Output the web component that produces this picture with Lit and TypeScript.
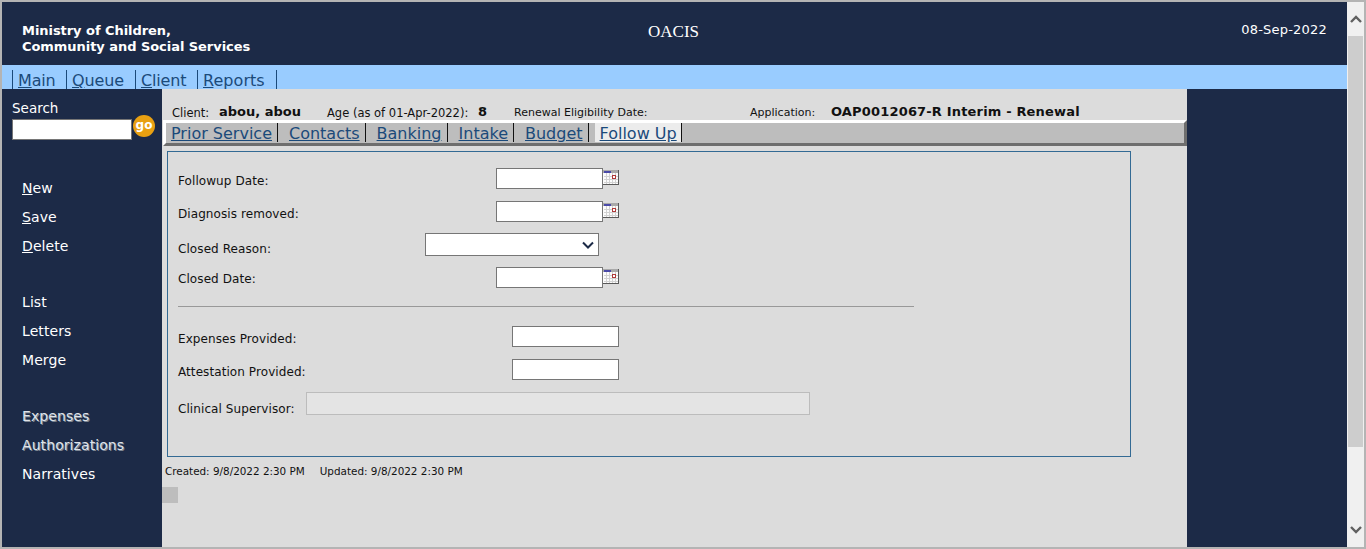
import { LitElement, html, css } from "lit";
import { customElement } from "lit/decorators.js";

const cal = html`<svg class="cal" width="16" height="15" viewBox="0 0 16 15" shape-rendering="crispEdges">
  <rect width="16" height="15" fill="#fcfcfc"/>
  <path d="M1 6.5H15M1 9.5H15M1 12.5H15M3.5 3V14M6.5 3V14M9.5 3V14M12.5 3V14" stroke="#d2d2d2" stroke-width="1" fill="none"/>
  <rect width="16" height="3" fill="#a9a9a9"/>
  <rect x="1" y="1" width="7" height="2" fill="#4a4aa8"/>
  <rect x="9.5" y="5.5" width="3" height="3" fill="#fff" stroke="#b03a3a"/>
  <path d="M15.5 0V14.5H0" stroke="#5a5a5a" fill="none"/>
</svg>`;

@customElement("app-root")
export class AppRoot extends LitElement {
  static styles = css`
    :host { display: block; width: 1366px; height: 549px; overflow: hidden; box-sizing: border-box;
      border: 2px solid #b4b4b4; font-family: "DejaVu Sans", Verdana, sans-serif; color: #111; }
    * { box-sizing: border-box; }
    .shell { display: flex; height: 545px; }
    .page { width: 1345px; display: flex; flex-direction: column; background: #1c2a47; }
    .head { height: 63px; display: grid; grid-template-columns: 1fr auto 1fr; color: #fff; padding: 0 20px; }
    .org { font-weight: 700; font-size: 13px; line-height: 16px; padding-top: 21px; letter-spacing: -0.05px; }
    .title { font-family: "Liberation Serif", serif; font-size: 17px; padding-top: 20px; line-height: 20px; transform: translateX(-1px); }
    .date { text-align: right; font-size: 13px; padding-top: 19px; line-height: 17px; letter-spacing: 0.2px; }
    .nav { height: 24px; background: #99ccff; display: flex; padding: 5px 0 0 10px; }
    .nav a { display: block; height: 19px; border-left: 1px solid #1b4a7a; padding-left: 5px; font-size: 16px; line-height: 21px;
      color: #1b4a7a; letter-spacing: -0.15px; }
    .nav a.n1 { width: 54px; }
    .nav a.n2 { width: 69px; }
    .nav a.n3 { width: 62px; }
    .nav a.n4 { width: 79px; letter-spacing: 0.05px; }
    .nav a.end { width: 0; padding: 0; }
    .nav u, .side u { text-decoration: underline; }
    .body { flex: 1; display: flex; min-height: 0; }
    .side { width: 160px; color: #fff; font-size: 14px; padding: 11px 0 0 10px; }
    .side .lbl { line-height: 16px; font-size: 13.5px; height: 16px; }
    .searchrow { display: flex; height: 30px; position: relative; }
    .searchrow .inp { width: 120px; height: 21px; margin-top: 3px; background: #fff; border: 1px solid #767676; }
    .go { width: 22px; height: 22px; margin-left: 1px; margin-top: -1px; border-radius: 50%; background: #e8a012; color: #fff;
      font-weight: 700; font-size: 12px; line-height: 20px; text-align: center; }
    .menu { display: flex; flex-direction: column; padding-left: 10px; }
    .menu a { display: block; height: 29px; line-height: 29px; letter-spacing: 0.08px; }
    .m1 { margin-top: 28px; }
    .gap { margin-top: 27px; }
    .dis { color: #dfe3ea; text-shadow: 1px 1px 0 #7f8794; }
    .main { width: 1025px; background: #dcdcdc; display: flex; flex-direction: column; }
    .info { height: 31px; display: flex; align-items: flex-end; padding: 0 0 0 10px; font-size: 11px; line-height: 14px; white-space: nowrap; }
    .info span { display: block; }
    .info .big { font-size: 11.5px; }
    .info .w47 { width: 47px; }
    .info .w108 { width: 108px; }
    .info .w151 { width: 151px; }
    .info .w36 { width: 36px; }
    .info .w236 { width: 236px; }
    .info .w81 { width: 81px; }
    .info b { font-size: 13px; font-weight: 700; }
    .info b.wide { letter-spacing: 0.17px; }
    .tabs { height: 26px; margin-left: 1px; background: #bdbdbd; border: 3px solid; border-color: #fff #6e6e6e #6e6e6e #fff; display: flex; padding-left: 5px; }
    .tabs a { display: block; height: 19px; padding: 0 5px 0 11px; border-right: 1px solid #111; font-size: 16px; line-height: 21px;
      color: #1b4a7a; text-decoration: underline; }
    .tabs a:first-child { padding-left: 0; }
    .tabs a.on { background: linear-gradient(to right, #bdbdbd 0 6px, #ececec 6px); padding-right: 4px; }
    .panel { margin: 5px 0 0 5px; width: 964px; height: 306px; border: 1px solid #336a94; padding: 16px 10px 0; font-size: 12px; display: flex; flex-direction: column; }
    .row { display: flex; align-items: center; height: 21px; }
    .l { letter-spacing: 0.08px; white-space: nowrap; padding-top: 4px; }
    .l.p2 { padding-top: 2px; }
    .l.p8 { padding-top: 8px; }
    .l.p10 { padding-top: 10px; }
    .w318 { width: 318px; }
    .w247 { width: 247px; }
    .w334 { width: 334px; }
    .w128 { width: 128px; }
    .i { display: block; width: 107px; height: 21px; background: #fff; border: 1px solid #767676; }
    .cal { display: block; align-self: flex-start; margin-top: 2px; }
    .sel { display: flex; align-items: center; justify-content: flex-end; width: 174px; height: 23px; background: #fff; border: 1px solid #767676; padding-right: 4px; }
    .ro { width: 504px; height: 23px; background: #e4e4e4; border: 1px solid #bcbcbc; }
    .mt12 { margin-top: 12px; }
    .mt11 { margin-top: 11px; }
    .mt19 { margin-top: 19px; }
    .h23 { height: 23px; }
    hr { width: 736px; margin: 18px 0 0; border: 0; height: 1px; background: #999; }
    .foot { margin: 8px 0 0 3px; font-size: 10.4px; line-height: 12px; display: flex; gap: 15px; }
    .blk { width: 16px; height: 16px; background: #bdbdbd; margin-top: 10px; }
    .right { width: 160px; }
    .sb { width: 17px; background: #f0f0f0; display: flex; flex-direction: column; align-items: center; }
    .sb .btn { height: 34px; display: flex; align-items: center; justify-content: center; }
    .sb .dn { margin-top: auto; height: 34px; display: flex; align-items: center; justify-content: center; }
    .thumb { width: 15px; height: 411px; background: #cdcdcd; }
  `;

  render() {
    return html`<div class="shell">
      <div class="page">
        <div class="head">
          <div class="org">Ministry of Children,<br />Community and Social Services</div>
          <div class="title">OACIS</div>
          <div class="date">08-Sep-2022</div>
        </div>
        <div class="nav">
          <a class="n1"><u>M</u>ain</a><a class="n2"><u>Q</u>ueue</a><a class="n3"><u>C</u>lient</a><a class="n4"><u>R</u>eports</a><a class="end"></a>
        </div>
        <div class="body">
          <div class="side">
            <div class="lbl">Search</div>
            <div class="searchrow"><div class="inp"></div><div class="go">go</div></div>
            <div class="menu">
              <a class="m1"><u>N</u>ew</a><a><u>S</u>ave</a><a><u>D</u>elete</a>
              <a class="gap">List</a><a>Letters</a><a>Merge</a>
              <a class="gap dis">Expenses</a><a class="dis">Authorizations</a><a>Narratives</a>
            </div>
          </div>
          <div class="main">
            <div class="info">
              <span class="big w47">Client:</span><span class="w108"><b>abou, abou</b></span>
              <span class="big w151">Age (as of 01-Apr-2022):</span><span class="w36"><b>8</b></span>
              <span class="w236">Renewal Eligibility Date:</span>
              <span class="w81">Application:</span><span><b class="wide">OAP0012067-R Interim - Renewal</b></span>
            </div>
            <div class="tabs">
              <a>Prior Service</a><a>Contacts</a><a>Banking</a><a>Intake</a><a>Budget</a><a class="on">Follow Up</a>
            </div>
            <div class="panel">
              <div class="row"><span class="l w318">Followup Date:</span><span class="i"></span>${cal}</div>
              <div class="row mt12"><span class="l w318">Diagnosis removed:</span><span class="i"></span>${cal}</div>
              <div class="row mt11 h23"><span class="l w247 p8">Closed Reason:</span><span class="sel"><svg width="12" height="8" viewBox="0 0 12 8"><path d="M1 1.5L6 6.5L11 1.5" fill="none" stroke="#1c2a47" stroke-width="2"/></svg></span></div>
              <div class="row mt11"><span class="l w318 p2">Closed Date:</span><span class="i"></span>${cal}</div>
              <hr />
              <div class="row mt19"><span class="l w334">Expenses Provided:</span><span class="i"></span></div>
              <div class="row mt12"><span class="l w334">Attestation Provided:</span><span class="i"></span></div>
              <div class="row mt12 h23"><span class="l w128 p10">Clinical Supervisor:</span><span class="ro"></span></div>
            </div>
            <div class="foot"><span>Created: 9/8/2022 2:30 PM</span><span>Updated: 9/8/2022 2:30 PM</span></div>
            <div class="blk"></div>
          </div>
          <div class="right"></div>
        </div>
      </div>
      <div class="sb">
        <div class="btn"><svg width="12" height="8" viewBox="0 0 12 8"><path d="M1 7L6 2L11 7" fill="none" stroke="#606060" stroke-width="2.4"/></svg></div>
        <div class="thumb"></div>
        <div class="dn"><svg width="12" height="8" viewBox="0 0 12 8"><path d="M1 1L6 6L11 1" fill="none" stroke="#606060" stroke-width="2.4"/></svg></div>
      </div>
    </div>`;
  }
}
